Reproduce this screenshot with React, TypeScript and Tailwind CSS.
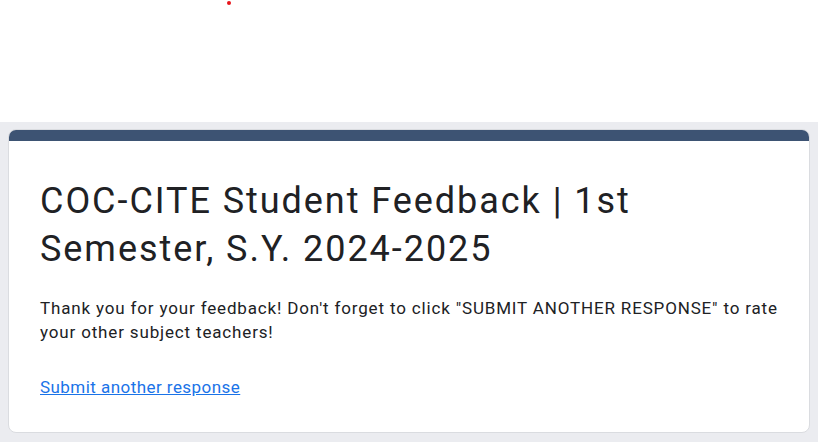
import React from 'react'

export default function App() {
    return (
        <main className="flex min-h-[442px] flex-col bg-[#ebecf0] font-['Roboto',sans-serif] text-[#202124]">
            <header className="relative h-[122px] bg-white">
                <span className="absolute left-[227px] top-[1px] h-[4px] w-[4px] rounded-full bg-[#e8141a]" />
            </header>
            <section className="px-2 pt-[7px]">
                <div className="overflow-hidden rounded-lg border border-[#dadce0] bg-white">
                    <div className="-mx-px -mt-px h-3 bg-[#3d5373]" />
                    <div className="pl-[31px] pr-6 pb-[33px] pt-[36px]">
                        <h1 className="text-[36px] leading-[48px] font-normal tracking-[1.95px]">
                            COC-CITE Student Feedback | 1st Semester, S.Y. 2024-2025
                        </h1>
                        <p className="mt-[23px] text-[17px] leading-6 tracking-[0.84px]">
                            Thank you for your feedback! Don't forget to click "SUBMIT ANOTHER RESPONSE" to rate your other subject teachers!
                        </p>
                        <div className="mt-[31px] text-[17px] leading-6 tracking-[0.45px]">
                            <a href="#" className="text-[#1a73e8] underline">Submit another response</a>
                        </div>
                    </div>
                </div>
            </section>
        </main>
    )
}
